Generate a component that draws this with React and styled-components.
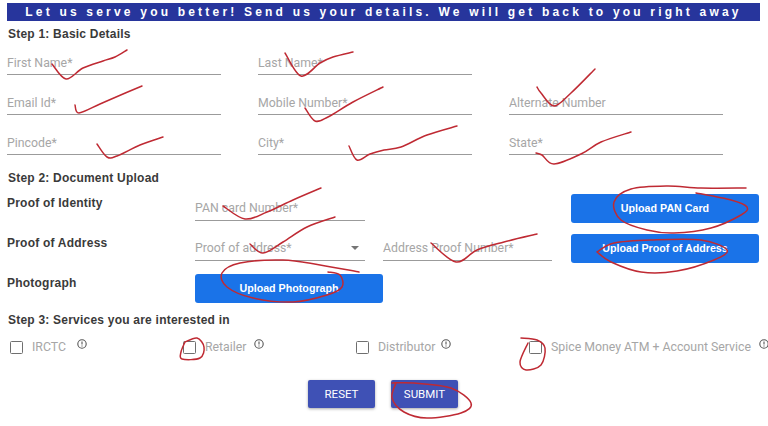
import React from "react";
import styled, { createGlobalStyle } from "styled-components";

const Global = createGlobalStyle`
  html, body { margin: 0; padding: 0; background: #fff; }
  body { font-family: Roboto, "Liberation Sans", sans-serif; overflow: hidden; }
`;

const Page = styled.div`
  position: relative;
  width: 768px;
  height: 426px;
  overflow: hidden;
  box-sizing: border-box;
  padding: 3px 8px 0 7px;
`;
const Banner = styled.div`
  height: 18px;
  width: 753px;
  background: #27359c;
  color: #fff;
  font: bold 12px/18px "Liberation Sans", Arial, sans-serif;
  letter-spacing: 3.2px;
  text-align: center;
  white-space: nowrap;
`;
const Heading = styled.div`
  height: 14px;
  margin-top: ${(p) => p.$top}px;
  margin-left: 1px;
  color: #3a3a3a;
  font: bold 12px/14px "Liberation Sans", Arial, sans-serif;
  letter-spacing: 0.22px;
`;
const BasicGrid = styled.div`
  display: grid;
  grid-template-columns: repeat(3, 214px);
  column-gap: 37px;
  row-gap: 6px;
`;
const Field = styled.div`
  position: relative;
  display: flex;
  align-items: flex-end;
  justify-content: space-between;
  box-sizing: border-box;
  height: 34px;
  width: ${(p) => p.$width || "auto"};
  padding-bottom: ${(p) => (p.$width ? 4 : 3)}px;
  border-bottom: 1px solid #9b9b9b;
  color: #a6a6a6;
  font-size: 12.3px;
  line-height: 16px;
  white-space: nowrap;
`;
const Caret = styled.span`
  width: 0;
  height: 0;
  margin: 0 6px 6px 0;
  border-left: 4px solid transparent;
  border-right: 4px solid transparent;
  border-top: 4px solid #757575;
`;
const DocGrid = styled.div`
  display: grid;
  grid-template-columns: repeat(4, 188px);
  grid-auto-rows: 40px;
  margin-top: 2px;
  align-items: center;
`;
const DocLabel = styled.div`
  grid-column: 1;
  align-self: start;
  margin-top: 9px;
  color: #3a3a3a;
  font: bold 12px/14px "Liberation Sans", Arial, sans-serif;
  letter-spacing: 0.22px;
`;
const Cell = styled.div`
  grid-column: ${(p) => p.$col};
  align-self: start;
`;
const UploadButton = styled.button`
  display: block;
  width: 188px;
  height: 29px;
  margin-top: 7px;
  padding: 0;
  border: 0;
  border-radius: 3px;
  background: #1a73e8;
  color: #fff;
  font: bold 10.7px/29px "Liberation Sans", Arial, sans-serif;
`;
const Services = styled.div`
  display: grid;
  grid-template-columns: repeat(4, 173px);
  padding-left: 3px;
  margin-top: 13px;
  height: 14px;
`;
const Service = styled.div`
  display: flex;
  align-items: center;
  white-space: nowrap;
  color: #a6a6a6;
  font-size: 12.3px;
  line-height: 14px;
`;
const Box = styled.span`
  box-sizing: border-box;
  width: 13px;
  height: 13px;
  margin-right: 9px;
  border: 1.5px solid #6f6f6f;
  border-radius: 1.5px;
  flex: none;
`;
const Info = styled.svg`
  width: 10px;
  height: 10px;
  margin: -7px 0 0 ${(p) => p.$gap}px;
  flex: none;
`;
const Actions = styled.div`
  display: flex;
  gap: 16px;
  justify-content: center;
  width: 752px;
  margin-top: 26px;
`;
const ActionButton = styled.button`
  width: 67px;
  height: 28px;
  padding: 0;
  border: 0;
  border-radius: 2px;
  background: #3f51b5;
  color: #fff;
  font: 400 11.5px/28px Roboto, sans-serif;
  text-transform: uppercase;
  box-shadow: 0 1px 3px rgba(0, 0, 0, 0.35);
`;
const Marks = styled.svg`
  position: absolute;
  left: 0;
  top: 0;
  width: 768px;
  height: 426px;
  pointer-events: none;
  fill: none;
  stroke: #bf2a33;
  stroke-width: 1.5;
  stroke-linecap: round;
  stroke-linejoin: round;
`;

const marks = [
  [[52,64],[66,79],[83,68],[103,61],[115,57],[127,50]],
  [[285,53],[301,76],[320,63],[333,57],[353,52]],
  [[75,105],[79,113],[100,104],[123,94],[142,86]],
  [[305,108],[315,121],[328,117],[353,102],[383,87]],
  [[537,87],[541,93],[554,106],[571,93],[595,69]],
  [[97,144],[107,157],[117,156],[140,145],[163,137]],
  [[349,146],[357,160],[370,154],[384,150],[401,147],[427,135],[457,126]],
  [[536,153],[542,155],[554,164],[581,154],[601,142],[631,132]],
  [[223,206],[245,219],[267,212],[293,200],[321,188]],
  [[250,244],[263,253],[283,242],[307,227],[335,217]],
  [[359,272],[320,265],[283,260],[240,263],[222,273],[227,287],[253,298],[293,302],[327,295],[342,287],[340,275],[328,272]],
  [[746,188],[701,188],[667,186],[631,189],[614,202],[621,220],[647,230],[674,233],[711,228],[741,215],[747,207],[731,200],[696,193]],
  [[597,252],[614,243],[651,240],[701,240],[727,250],[714,260],[677,271],[641,272],[611,262],[597,252]],
  [[431,243],[456,262],[477,250],[504,242],[537,234]],
  [[185,342],[197,338],[204,347],[200,358],[182,359],[181,352],[185,342]],
  [[521,338],[537,340],[545,348],[541,365],[526,370],[520,362],[528,343]],
  [[392,383],[414,383],[451,388],[471,403],[461,413],[427,418],[404,412],[392,398],[396,383]],
];

// Catmull-Rom through the hand-drawn points, so the pen strokes stay smooth.
const toPath = (pts) => {
  let d = `M${pts[0][0]} ${pts[0][1]}`;
  for (let i = 0; i < pts.length - 1; i++) {
    const p0 = pts[i - 1] || pts[i];
    const p1 = pts[i];
    const p2 = pts[i + 1];
    const p3 = pts[i + 2] || p2;
    const t = 1 / 6;
    d += ` C${p1[0] + (p2[0] - p0[0]) * t} ${p1[1] + (p2[1] - p0[1]) * t} ${p2[0] - (p3[0] - p1[0]) * t} ${p2[1] - (p3[1] - p1[1]) * t} ${p2[0]} ${p2[1]}`;
  }
  return d;
};

const InfoIcon = ({ gap }) => (
  <Info $gap={gap} viewBox="0 0 10 10" fill="none" stroke="#555" strokeWidth="1.1">
    <circle cx="5" cy="5" r="4.2" />
    <path d="M5 2.6v2.8M5 6.6v.9" />
  </Info>
);

const basic = ["First Name*", "Last Name*", null, "Email Id*", "Mobile Number*", "Alternate Number", "Pincode*", "City*", "State*"];
const services = [
  ["IRCTC", 11],
  ["Retailer", 8],
  ["Distributor", 6],
  ["Spice Money ATM + Account Service", 8],
];

export default function App() {
  return (
    <Page>
      <Global />
      <Banner>Let us serve you better! Send us your details. We will get back to you right away</Banner>
      <Heading $top={6}>Step 1: Basic Details</Heading>
      <BasicGrid>
        {basic.map((label, i) => (label ? <Field key={i}>{label}</Field> : <span key={i} />))}
      </BasicGrid>
      <Heading $top={16}>Step 2: Document Upload</Heading>
      <DocGrid>
        <DocLabel>Proof of Identity</DocLabel>
        <Cell $col={2}><Field $width="170px">PAN card Number*</Field></Cell>
        <Cell $col={4}><UploadButton>Upload PAN Card</UploadButton></Cell>
        <DocLabel>Proof of Address</DocLabel>
        <Cell $col={2}><Field $width="170px">Proof of address*<Caret /></Field></Cell>
        <Cell $col={3}><Field $width="169px">Address Proof Number*</Field></Cell>
        <Cell $col={4}><UploadButton>Upload Proof of Address</UploadButton></Cell>
        <DocLabel>Photograph</DocLabel>
        <Cell $col={2}><UploadButton>Upload Photograph</UploadButton></Cell>
      </DocGrid>
      <Heading $top={6}>Step 3: Services you are interested in</Heading>
      <Services>
        {services.map(([label, gap]) => (
          <Service key={label}>
            <Box />
            {label}
            <InfoIcon gap={gap} />
          </Service>
        ))}
      </Services>
      <Actions>
        <ActionButton>Reset</ActionButton>
        <ActionButton>Submit</ActionButton>
      </Actions>
      <Marks viewBox="0 0 768 426">
        {marks.map((pts, i) => <path key={i} d={toPath(pts)} />)}
      </Marks>
    </Page>
  );
}
